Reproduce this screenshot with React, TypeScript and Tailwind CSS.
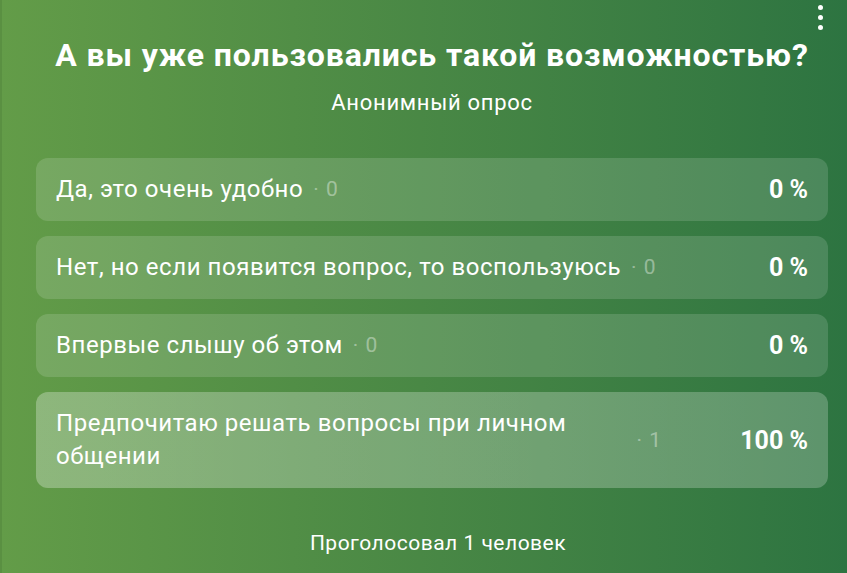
import React from "react";

const options = [
  { label: "Да, это очень удобно", count: 0, pct: 0 },
  { label: "Нет, но если появится вопрос, то воспользуюсь", count: 0, pct: 0 },
  { label: "Впервые слышу об этом", count: 0, pct: 0 },
  { label: "Предпочитаю решать вопросы при личном общении", count: 1, pct: 100 },
];

export default function App() {
  return (
    <div
      className="relative w-full h-[573px] overflow-hidden bg-linear-to-r from-[#639c48] to-[#2d7441] text-white flex flex-col pl-[36px] pr-[19px]"
      style={{ fontFamily: "Roboto, 'Noto Sans', sans-serif" }}
    >
      <div className="absolute left-0 top-0 bottom-0 w-[2px] bg-[#5a9042]" />
      <div className="absolute top-[5px] left-[818px] flex flex-col gap-[5px]">
        <span className="block w-[5px] h-[5px] rounded-full bg-white" />
        <span className="block w-[5px] h-[5px] rounded-full bg-white" />
        <span className="block w-[5px] h-[5px] rounded-full bg-white" />
      </div>
      <h1 className="mt-[36px] text-center text-[32px] leading-[38px] font-bold tracking-[0.9px] whitespace-nowrap">
        А вы уже пользовались такой возможностью?
      </h1>
      <div className="mt-[14px] text-center text-[22px] leading-[30px] tracking-[0.7px]">Анонимный опрос</div>
      <div className="mt-[40px] flex flex-col gap-[15px]">
        {options.map((o, i) => (
          <div
            key={i}
            className="relative overflow-hidden rounded-[12px] bg-white/[0.14]"
          >
            {o.pct > 0 && (
              <div
                className="absolute inset-y-0 left-0 bg-linear-to-r from-white/[0.17] to-white/[0.1]"
                style={{ width: `${o.pct}%` }}
              />
            )}
            <div className="relative flex items-center pl-[20px] pr-[20px] py-[15px]">
              <div className="flex-1 min-w-0 flex items-center">
                <span className="text-[24px] leading-[33px] tracking-[0.55px] min-w-0">{o.label}</span>
                <span className="shrink-0 ml-[10px] text-[21px] leading-[33px] text-white/40 whitespace-nowrap tracking-[1px]">
                  · {o.count}
                </span>
              </div>
              <div className="w-[146px] shrink-0 text-right text-[25px] leading-[33px] font-bold whitespace-nowrap">
                {o.pct} %
              </div>
            </div>
          </div>
        ))}
      </div>
      <div className="mt-[40px] ml-[12px] text-center text-[21px] leading-[30px] tracking-[0.5px]">Проголосовал 1 человек</div>
    </div>
  );
}
